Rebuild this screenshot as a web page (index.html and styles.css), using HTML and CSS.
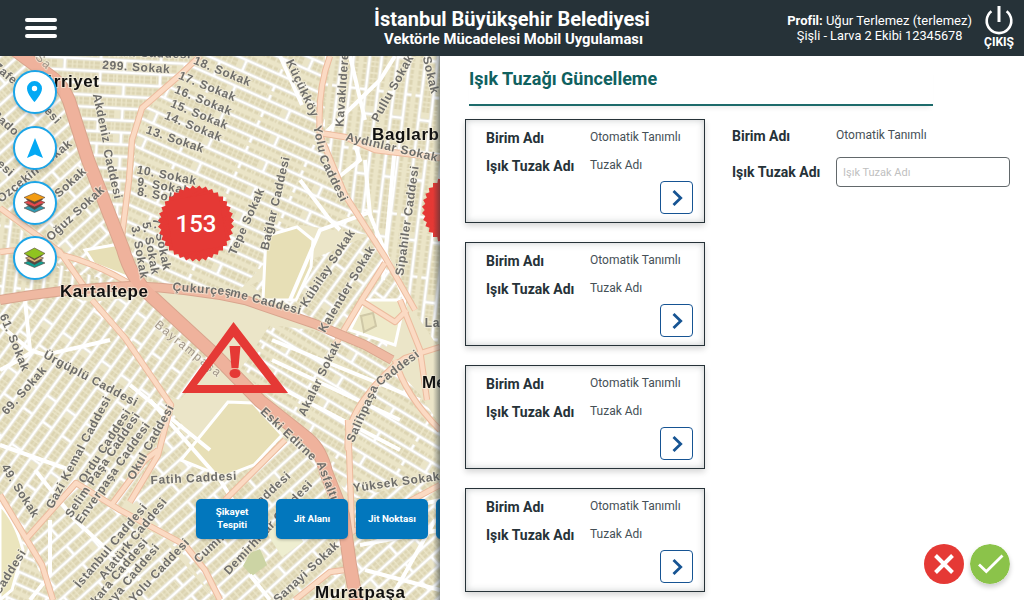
FILE: index.html
```html
<!DOCTYPE html>
<html lang="tr">
<head>
<meta charset="utf-8">
<title>Işık Tuzağı Güncelleme</title>
<link rel="stylesheet" href="styles.css">
</head>
<body>
<header class="topbar">
  <div class="menu"><span></span><span></span><span></span></div>
  <div class="brand">
    <h1>İstanbul Büyükşehir Belediyesi</h1>
    <p>Vektörle Mücadelesi Mobil Uygulaması</p>
  </div>
  <div class="account">
    <div class="profile"><p><b>Profil:</b> Uğur Terlemez (terlemez)</p><p class="team">Şişli - Larva 2 Ekibi 12345678</p></div>
    <div class="logout">
      <svg width="30" height="29" viewBox="0 0 30 29"><path d="M7.4 5.2A12.3 12.3 0 1 0 22.6 5.2" fill="none" stroke="#fff" stroke-width="2.6"/><path d="M15 0V16" stroke="#fff" stroke-width="3"/></svg>
      <span>ÇIKIŞ</span>
    </div>
  </div>
</header>
<main class="content">
  <section class="map">
    <svg class="map-art" width="440" height="544" viewBox="0 56 440 544">
      <defs>
        <g id="tile">
          <path d="M0 6H60M0 18H60M8 6V18M44 18V24M44 0V6" stroke="#d6d1bd" stroke-width="4.2"/>
          <path d="M2 2H60M11 10H60M11 14H60M2 22H60" stroke="#dcd4b2" stroke-width="2.8" stroke-dasharray="4 1.5 3 1.5 5 2"/>
          <path d="M0 6H60M0 18H60M8 6V18M44 18V24M44 0V6" stroke="#fff" stroke-width="3"/>
        </g>
        <pattern id="pUp" width="60" height="24" patternUnits="userSpaceOnUse" patternTransform="rotate(-42)"><use href="#tile"/></pattern>
        <pattern id="pFlat" width="60" height="24" patternUnits="userSpaceOnUse" patternTransform="rotate(3)"><use href="#tile"/></pattern>
        <pattern id="pDown" width="60" height="28" patternUnits="userSpaceOnUse" patternTransform="translate(0 5) rotate(24)"><use href="#tile"/></pattern>
        <pattern id="pVert" width="60" height="28" patternUnits="userSpaceOnUse" patternTransform="rotate(97)"><use href="#tile"/></pattern>
        <pattern id="pSteep" width="60" height="24" patternUnits="userSpaceOnUse" patternTransform="rotate(-54)"><use href="#tile"/></pattern>
        <pattern id="pLow" width="60" height="28" patternUnits="userSpaceOnUse" patternTransform="rotate(31)"><use href="#tile"/></pattern>
        <rect id="sq" x="-27" y="-27" width="54" height="54"/>
        <g id="burst" fill="#e53935"><use href="#sq"/><use href="#sq" transform="rotate(10)"/><use href="#sq" transform="rotate(20)"/><use href="#sq" transform="rotate(30)"/><use href="#sq" transform="rotate(40)"/><use href="#sq" transform="rotate(50)"/><use href="#sq" transform="rotate(60)"/><use href="#sq" transform="rotate(70)"/><use href="#sq" transform="rotate(80)"/></g>
      </defs>
      <g class="terrain">
      <rect y="56" width="440" height="544" fill="#ebe5c8"/>
      <path d="M0 56H15L58 85L87 150L148 292L60 270L0 200Z" fill="url(#pUp)"/>
      <path d="M20 56H195L180 75L140 110L125 240L148 290L87 150L65 90Z" fill="url(#pFlat)"/>
      <path d="M195 56H325V150L370 235L300 225L240 290L148 290L125 240L140 110Z" fill="url(#pDown)"/>
      <path d="M325 56H440V350L400 290L322 150Z" fill="url(#pVert)"/>
      <path d="M370 235L410 300L385 350L300 320L250 285Z" fill="url(#pSteep)"/>
      <path d="M0 305L60 295L92 302L170 405L150 460L120 510L75 483L25 540L0 495Z" fill="url(#pSteep)"/>
      <path d="M92 302L148 295L215 360L180 400L160 395Z" fill="url(#pSteep)"/>
      <path d="M0 210L60 265L130 288L0 302Z" fill="url(#pVert)"/>
      <path d="M130 500L170 410L220 470L300 430L345 500V600H215L180 550L75 483L25 540L52 600H215Z" fill="url(#pUp)"/>
      <path d="M0 500L25 540L52 600H0Z" fill="url(#pDown)"/>
      <path d="M270 325L330 332L385 355L420 395L440 425V480L350 500L310 435L240 370Z" fill="url(#pLow)"/>
      <path d="M350 500L440 475V600H358Z" fill="url(#pUp)"/>
      <g fill="#e7dfb6" stroke="#fff" stroke-width="3">
        <path d="M266 236L297 227L313 240L311 267L296 300L263 300Z"/>
        <path d="M181 460L228 402L253 403L282 435L254 465L223 477Z"/>
        <path d="M85 250L120 244L137 281L94 264Z"/>
        <path d="M365 300H405L395 345L350 330Z" fill="#eeeaca"/>
        <path d="M0 505Q15 520 23 550L12 590L0 600Z" fill="#ebe5bd"/>
      </g>
      <path d="M361 316L373 313L376 326L364 332Z" fill="#e8e2bd" stroke="#cfc8a7" stroke-width="2"/>
      <path d="M250 553L260 549L267 565L252 576L243 566Z" fill="#ccd4a4"/>
      <path d="M265 530L292 520L303 542L282 557Z" fill="#eeeed0"/>
      <g fill="none" stroke="#fff" stroke-width="4">
        <path d="M280 56L302 105M350 56L365 120M320 138L380 80L395 56M365 160L370 215L405 300M395 145L383 280M400 150L440 155M335 180L360 160L355 145M370 212L320 230L290 300M300 180L330 220L340 230"/>
        <path d="M0 325L30 350L45 355L110 340M25 300L30 350M0 370Q20 360 35 350M35 470L75 520L140 580M50 520V575L30 600M150 400L220 480L245 520M272 340L420 400M272 360L400 420M285 390L400 450M0 445L70 470"/>
        <path d="M355 520L440 500M360 545L440 530M390 600L435 520M365 570L440 590M270 600L250 575M130 385L210 450"/>
      </g>
      <g fill="none" stroke-linejoin="round">
        <g stroke="#ecbb9e" stroke-width="6.400"><path id="minor" d="M200 56L181 74L142 108L132 140L129 180L122 235L128 270M330 56Q317 90 320 135L345 195L385 257L415 310M320 133L345 137L375 150L440 158M385 263L363 298L335 345M92 300L125 338L171 405L158 455L130 502M0 208L60 252L90 295M0 252Q60 242 132 285M0 495L27 540L42 565L53 600M27 538L76 483L120 510L185 545L205 570L220 600M112 504L145 460L158 450M348 420L352 530M352 532L440 485M348 450Q345 425 365 398T405 358L440 347M395 360Q405 395 440 430M360 300L395 322L407 310M400 300L420 350L427 400M285 440L225 500M295 600L330 572L352 569"/></g>
        <g stroke="#fbdac3" stroke-width="4.400"><use href="#minor"/></g>
        <g stroke="#d9a58e" stroke-width="10"><path id="cross" d="M0 300Q70 288 130 286Q190 288 245 300L315 324L365 345L392 360"/></g>
        <g stroke="#d9a58e" stroke-width="14"><path id="trunk" d="M15 50L54 79Q67 90 72 110L88 160L123 249Q131 278 150 295L215 355L260 401L308 439Q321 450 326 472L343 515L350 565L357 605"/></g>
        <g stroke="#efb9a2" stroke-width="8"><use href="#cross"/></g>
        <g stroke="#efb29c" stroke-width="12"><use href="#trunk"/></g>
      </g>
      <g class="street">
        <text transform="translate(150 57) rotate(2)">Inen Caddesi</text>
        <text transform="translate(136 71) rotate(4)">299. Sokak</text>
        <text transform="translate(221 75) rotate(22)">18. Sokak</text>
        <text transform="translate(206 90) rotate(22)">17. Sokak</text>
        <text transform="translate(202 104) rotate(22)">16. Sokak</text>
        <text transform="translate(198 118) rotate(22)">15. Sokak</text>
        <text transform="translate(192 130) rotate(22)">14. Sokak</text>
        <text transform="translate(174 143) rotate(19)">13. Sokak</text>
        <text transform="translate(166 179) rotate(11)">10. Sokak</text>
        <text transform="translate(163 190) rotate(10)">9. Sokak</text>
        <text transform="translate(163 200) rotate(10)">8. Sokak</text>
        <text transform="translate(136 253) rotate(80)">3. Sokak</text>
        <text transform="translate(147 249) rotate(80)">5. Sokak</text>
        <text transform="translate(158 245) rotate(78)">7. Sokak</text>
        <text transform="translate(98 119) rotate(78)">Akdeniz</text>
        <text transform="translate(109 175) rotate(77)">Caddesi</text>
        <text transform="translate(5 78) rotate(40)">Zafer</text>
        <text transform="translate(3 126) rotate(42)">Sado</text>
        <text transform="translate(3 171) rotate(42)">esi</text>
        <text class="faint" transform="translate(41 64) rotate(45)">Sa</text>
        <text transform="translate(39 106) rotate(48)">Caddesi</text>
        <text transform="translate(37 174) rotate(-39)">Özçekin Sokak</text>
        <text transform="translate(73 185) rotate(-43)">Sokak</text>
        <text transform="translate(78 216) rotate(-43)">Oğuz Sokak</text>
        <text transform="translate(299 90) rotate(65)">Küçükköy</text>
        <text transform="translate(316 140) rotate(78)">Yolu</text>
        <text transform="translate(330 180) rotate(64)">Caddesi</text>
        <text transform="translate(346 90) rotate(-86)">Kavaklıdere</text>
        <text transform="translate(396 90) rotate(-61)">Pullu Sokak</text>
        <text transform="translate(427 76) rotate(77)">Sokak</text>
        <text transform="translate(391 151) rotate(13)">Aydınlar Sokak</text>
        <text transform="translate(250 223) rotate(-66)">Tepe Sokak</text>
        <text transform="translate(279 204) rotate(-77)">Bağlar Caddesi</text>
        <text transform="translate(411 221) rotate(-82)">Sipahiler Caddesi</text>
        <text transform="translate(331 270) rotate(-57)">Kübilay Sokak</text>
        <text transform="translate(350 291) rotate(-59)">Kalender Sokak</text>
        <text transform="translate(202 293) rotate(5)">Çukurçeş</text>
        <text transform="translate(265 305) rotate(15)">me Caddesi</text>
        <text transform="translate(438 327)">Lale</text>
        <text transform="translate(11 344) rotate(68)">61. Sokak</text>
        <text transform="translate(27 393) rotate(-48)">69. Sokak</text>
        <text transform="translate(89 382) rotate(28)">Ürgüplü Caddesi</text>
        <text class="faint" transform="translate(186 352) rotate(39)">Bayrampaşa</text>
        <text transform="translate(323 380) rotate(-64)">Akalar Sokak</text>
        <text transform="translate(366 415) rotate(-66)">Salihpaşa</text>
        <text transform="translate(400 371) rotate(-37)">Caddesi</text>
        <text transform="translate(286 437) rotate(43)">Eski Edirne</text>
        <text transform="translate(324 482) rotate(69)">Asfaltı</text>
        <text transform="translate(17 493) rotate(58)">49. Sokak</text>
        <text transform="translate(82 454) rotate(-62)">Gazi Kemal Caddesi</text>
        <text transform="translate(108 448) rotate(-57)">Ordu Caddesi</text>
        <text transform="translate(106 467) rotate(-56)">Selim Paşa Caddesi</text>
        <text transform="translate(116 475) rotate(-55)">Enverpaşa Caddesi</text>
        <text transform="translate(154 444) rotate(-61)">Okul Caddesi</text>
        <text transform="translate(194 482) rotate(-3)">Fatih Caddesi</text>
        <text transform="translate(114 548) rotate(-50)">İstanbul Caddesi</text>
        <text transform="translate(136 541) rotate(-51)">Atatürk Caddesi</text>
        <text transform="translate(117 580) rotate(-50)">Ankara Caddesi</text>
        <text transform="translate(130 584) rotate(-50)">Konya Caddesi</text>
        <text transform="translate(162 573) rotate(-47)">Yolu Caddesi</text>
        <text transform="translate(13 574) rotate(-58)">Caddesi</text>
        <text transform="translate(245 520) rotate(-43)">Cumhuriyet Caddesi</text>
        <text transform="translate(271 530) rotate(-47)">Demirhisar Caddesi</text>
        <text transform="translate(309 575) rotate(-43)">Sanayi Sokak</text>
        <text transform="translate(397 486) rotate(-8)">Yüksek Sokak</text>
      </g>
      <g class="district">
        <text x="30" y="87" textLength="69">Hürriyet</text>
        <text x="372" y="140" textLength="67">Baglarb</text>
        <text x="60" y="297" textLength="88">Kartaltepe</text>
        <text x="422" y="388">Me</text>
        <text x="315" y="598" textLength="90">Muratpaşa</text>
      </g>
      </g>
      <use href="#burst" x="196" y="223.500"/>
      <use href="#burst" x="460" y="210"/>
      <text class="count" x="196" y="232">153</text>
      <path fill="#e53935" fill-rule="evenodd" d="M233.500 322L288 393H182ZM233.500 337L197 385H271Z"/>
      <path d="M229.500 346H240.500L238.500 368H231.500Z" fill="#e53935"/><ellipse cx="235" cy="373.500" rx="5.500" ry="4.500" fill="#e53935"/>
    </svg>
    <nav class="tools">
      <div class="tool"><svg width="44" height="44" viewBox="0 0 44 44"><path fill="#03a9f4" fill-rule="evenodd" d="M21.500 11A7.500 7.500 0 0 0 14 18.500C14 24 21.500 32 21.500 32S29 24 29 18.500A7.500 7.500 0 0 0 21.500 11ZM21.500 15.800A2.700 2.700 0 1 1 21.500 21.200A2.700 2.700 0 0 1 21.500 15.800Z"/></svg></div>
      <div class="tool"><svg width="44" height="44" viewBox="0 0 44 44"><path fill="#03a9f4" d="M22 12L30 32L22 28.500L14 32Z"/></svg></div>
      <div class="tool"><svg width="44" height="44" viewBox="0 0 44 44" stroke="#57443c" stroke-width=".6"><path fill="#2f99b0" d="M11 27L21.500 22.500L32 27L21.500 31.500Z"/><path fill="#58433e" d="M13.500 23.500L21.500 28.500L29.500 23.500L21.500 20Z"/><path fill="#e5484c" d="M11 21.500L21.500 17L32 21.500L21.500 26Z"/><path fill="#5b4638" d="M13.500 18.500L21.500 23L29.500 18.500L21.500 14Z"/><path fill="#f39c12" d="M11 16.500L21.500 12L32 16.500L21.500 21Z"/></svg></div>
      <div class="tool"><svg width="44" height="44" viewBox="0 0 44 44" stroke="#57443c" stroke-width=".6"><path fill="#119d91" d="M11 27L21.500 22.500L32 27L21.500 31.500Z"/><path fill="#58433e" d="M13.500 24L21.500 28.500L29.500 24L21.500 20Z"/><path fill="#d8b076" d="M12.500 22L21.500 18L30.500 22L21.500 26.500Z"/><path fill="#5b4638" d="M13.500 19L21.500 24L29.500 19L21.500 14Z"/><path fill="#8fc31f" d="M11 17.500L21.500 12L32 17.500L21.500 23Z"/></svg></div>
    </nav>
    <div class="actions"><button>Şikayet Tespiti</button><button>Jit Alanı</button><button>Jit Noktası</button><button></button></div>
  </section>
  <section class="panel">
    <h2>Işık Tuzağı Güncelleme</h2>
    <div class="columns">
      <div class="cards">
        <article class="card"><dl><dt>Birim Adı</dt><dd>Otomatik Tanımlı</dd><dt>Işık Tuzak Adı</dt><dd>Tuzak Adı</dd></dl><button class="go"><svg width="30" height="30" viewBox="0 0 30 30"><path d="M11.500 8L18.700 15L11.500 22"/></svg></button></article>
        <article class="card"><dl><dt>Birim Adı</dt><dd>Otomatik Tanımlı</dd><dt>Işık Tuzak Adı</dt><dd>Tuzak Adı</dd></dl><button class="go"><svg width="30" height="30" viewBox="0 0 30 30"><path d="M11.500 8L18.700 15L11.500 22"/></svg></button></article>
        <article class="card"><dl><dt>Birim Adı</dt><dd>Otomatik Tanımlı</dd><dt>Işık Tuzak Adı</dt><dd>Tuzak Adı</dd></dl><button class="go"><svg width="30" height="30" viewBox="0 0 30 30"><path d="M11.500 8L18.700 15L11.500 22"/></svg></button></article>
        <article class="card"><dl><dt>Birim Adı</dt><dd>Otomatik Tanımlı</dd><dt>Işık Tuzak Adı</dt><dd>Tuzak Adı</dd></dl><button class="go"><svg width="30" height="30" viewBox="0 0 30 30"><path d="M11.500 8L18.700 15L11.500 22"/></svg></button></article>
      </div>
      <form class="form">
        <div class="row"><label>Birim Adı</label><span>Otomatik Tanımlı</span></div>
        <div class="row field"><label>Işık Tuzak Adı</label><input type="text" placeholder="Işık Tuzak Adı"></div>
      </form>
    </div>
    <div class="confirm">
      <svg width="40" height="40" viewBox="0 0 40 40"><circle cx="20" cy="20" r="20" fill="#e53935"/><path d="M11.500 11.500L28.500 28.500M28.500 11.500L11.500 28.500" stroke="#fff" stroke-width="4"/></svg>
      <svg class="accept" width="40" height="40" viewBox="0 0 40 40"><circle cx="20" cy="20" r="20" fill="#8bc34a"/><path d="M9 20.500L16.300 27.500L32.500 11.500" fill="none" stroke="#fff" stroke-width="2.800"/></svg>
    </div>
  </section>
</main>
</body>
</html>
```
FILE: styles.css
```css
* { box-sizing: border-box; }
body { margin: 0; width: 1024px; height: 600px; overflow: hidden; font-family: Roboto, "Liberation Sans", sans-serif; color: #263238; background: #fff; }
h1, h2, p, dl, dd { margin: 0; }
button { font-family: inherit; padding: 0; }

.topbar { height: 56px; background: #263238; color: #fff; display: grid; grid-template-columns: 340px 344px 340px; }
.menu { display: flex; flex-direction: column; gap: 4px; padding: 18px 0 0 25px; }
.menu span { width: 32px; height: 4px; border-radius: 2px; background: #fff; }
.brand { text-align: center; padding-top: 8px; }
.brand h1 { font-size: 20px; line-height: 23px; font-weight: 700; white-space: nowrap; }
.brand p { font-size: 14.800px; line-height: 17px; font-weight: 700; white-space: nowrap; padding-left: 3px; }
.account { display: flex; justify-content: flex-end; gap: 10px; padding-right: 8px; }
.profile { font-size: 13px; line-height: 15px; text-align: center; padding-top: 13px; white-space: nowrap; }
.profile b { font-weight: 700; }
.team { font-size: 12.750px; }
.logout { width: 34px; display: flex; flex-direction: column; align-items: center; padding-top: 6px; font-size: 12px; line-height: 15px; font-weight: 700; }

.content { display: flex; height: 544px; }
.map { position: relative; width: 440px; height: 544px; overflow: hidden; }
.map::after { content: ""; position: absolute; inset: 0 0 0 auto; width: 7px; background: linear-gradient(to right, transparent, rgba(38, 50, 56, .5)); }
.map-art { display: block; }
.terrain { filter: blur(.4px); }
.street { font: bold 12px "Liberation Sans", sans-serif; letter-spacing: .6px; text-anchor: middle; fill: #6f6e6b; stroke: #f5f0df; stroke-opacity: .6; stroke-width: 2px; paint-order: stroke; }
.street .faint { fill: #a09588; letter-spacing: 1.500px; font-weight: normal; }
.district { font: bold 17px "Liberation Sans", sans-serif; fill: #111; stroke: #f5f0df; stroke-width: 2px; stroke-opacity: .7; paint-order: stroke; }
.count { font: 500 24px Roboto, sans-serif; fill: #fff; text-anchor: middle; }
.tools { position: absolute; left: 13px; top: 14px; display: flex; flex-direction: column; gap: 11.300px; }
.tool { width: 44px; height: 44px; border: 2px solid #1ba5e8; border-radius: 50%; background: #fff; display: flex; align-items: center; justify-content: center; box-shadow: 0 2px 4px rgba(0, 0, 0, .2); }
.tool:nth-child(2) { margin: .7px 0 -.7px; }
.tool svg { flex: none; }
.actions { position: absolute; left: 196px; top: 443px; display: flex; gap: 8px; }
.actions button { width: 72px; height: 40px; padding: 0 14px 2px; border: 0; border-radius: 5px; background: #0277bd; color: #fff; font-size: 9.800px; line-height: 13px; font-weight: 700; box-shadow: 0 1px 3px rgba(0, 0, 0, .25); }
.actions button:nth-child(n+2) { padding: 0 0 1px; }

.panel { position: relative; width: 584px; padding: 11px 14px 0 25px; background: #fff; }
.panel h2 { width: 464px; height: 39px; margin-left: 4px; padding-bottom: 14px; border-bottom: 2px solid #1d6b6b; color: #10615f; font-size: 18px; line-height: 24px; font-weight: 700; box-shadow: 0 5px 5px -3px rgba(0, 0, 0, .08); }
.columns { display: flex; gap: 27px; padding-top: 13px; }
.cards { display: flex; flex-direction: column; gap: 19px; }
.card { width: 240px; height: 104px; padding: 9px 11px 0 20px; border: 1px solid #263238; box-shadow: 0 3px 6px rgba(0, 0, 0, .16), inset 0 0 7px rgba(38, 50, 56, .25); display: flex; flex-direction: column; }
.card dl { display: grid; grid-template-columns: 104px 1fr; grid-auto-rows: 28px; }
.card dt, .form label { font-size: 14px; line-height: 18px; font-weight: 700; }
.card dd, .form span { font-size: 12px; line-height: 16px; font-weight: 400; color: #455056; }
.go { width: 33px; height: 33px; margin-top: -4px; align-self: flex-end; border: 1px solid #165493; border-radius: 4px; background: #fff; display: flex; align-items: center; justify-content: center; flex: none; }
.go path { fill: none; stroke: #165493; stroke-width: 2.800; }
.form { width: 278px; padding-top: 8px; }
.row { display: grid; grid-template-columns: 104px 174px; height: 30px; }
.field { align-items: center; }
.form input { width: 174px; height: 30px; border: 1px solid #62686b; border-radius: 4px; padding: 0 6px; font: 400 11px Roboto, sans-serif; }
.form input::placeholder { color: #c0c0c0; }
.confirm { position: absolute; right: 14px; bottom: 16px; display: flex; gap: 6px; }
.accept { border-radius: 50%; box-shadow: 0 3px 5px rgba(0, 0, 0, .2); }
```
